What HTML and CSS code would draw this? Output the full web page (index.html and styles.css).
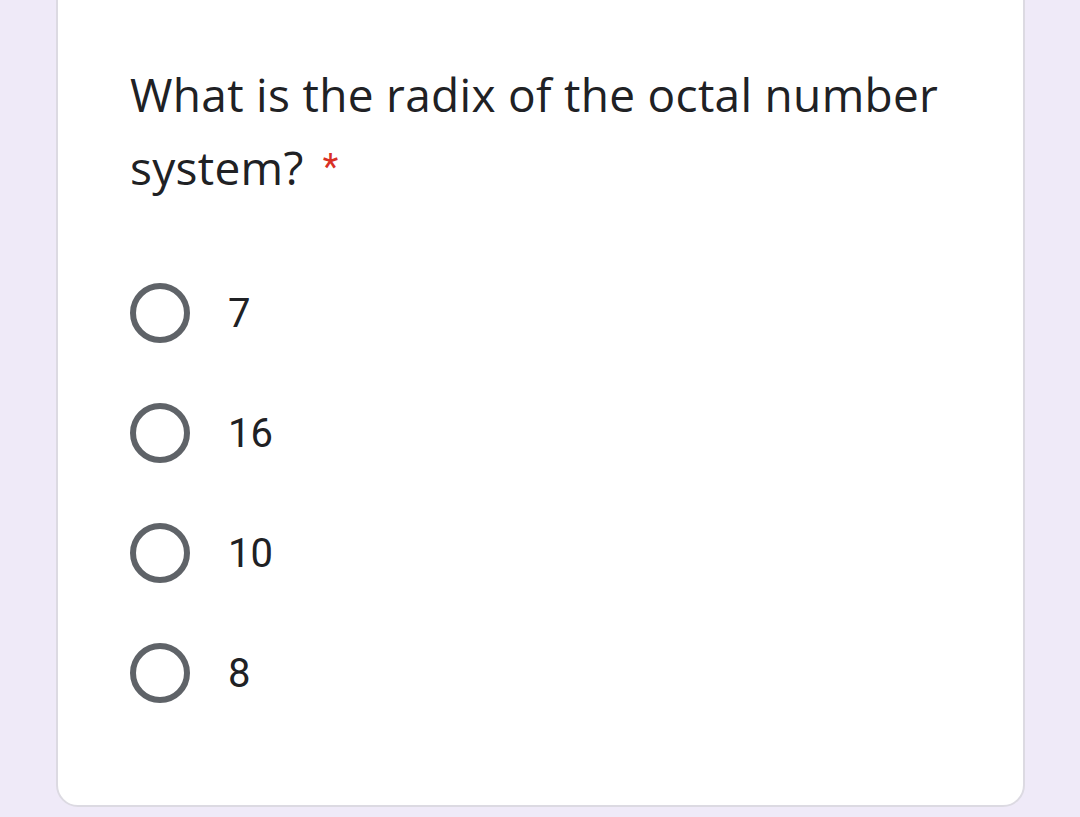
FILE: index.html
```html
<!DOCTYPE html>
<html>
<head>
<meta charset="utf-8">
<link rel="stylesheet" href="styles.css">
</head>
<body>
<div class="card">
  <div class="question">What is the radix of the octal number system?<span class="req">*</span></div>
  <div class="options">
    <div class="option"><span class="radio"></span><span class="label">7</span></div>
    <div class="option"><span class="radio"></span><span class="label">16</span></div>
    <div class="option"><span class="radio"></span><span class="label">10</span></div>
    <div class="option"><span class="radio"></span><span class="label">8</span></div>
  </div>
</div>
</body>
</html>
```
FILE: styles.css
```css
html, body {
  margin: 0;
  padding: 0;
  background: #efeaf8;
  width: 1080px;
  height: 817px;
  overflow: hidden;
}
body {
  font-family: Roboto, "Liberation Sans", sans-serif;
  color: #202124;
}
.card {
  box-sizing: border-box;
  margin: -30px 0 0 56px;
  width: 969px;
  height: 837px;
  background: #fff;
  border: 2px solid #dcdae2;
  border-radius: 22px;
  padding: 86px 0 0 72px;
}
.question {
  font-family: "Open Sans", Roboto, sans-serif;
  font-size: 46px;
  letter-spacing: 0.3px;
  line-height: 73px;
  width: 860px;
}
.req {
  color: #d93025;
  margin-left: 19px;
  font-family: Roboto, sans-serif;
  font-size: 36px;
  line-height: 0;
  vertical-align: 6px;
}
.options {
  margin-top: 79px;
  display: flex;
  flex-direction: column;
  gap: 60px;
}
.option {
  display: flex;
  align-items: center;
  height: 60px;
}
.radio {
  box-sizing: border-box;
  width: 60px;
  height: 60px;
  border: 6px solid #5f6368;
  border-radius: 50%;
  flex: none;
}
.label {
  margin-left: 38px;
  font-size: 40px;
}
```
